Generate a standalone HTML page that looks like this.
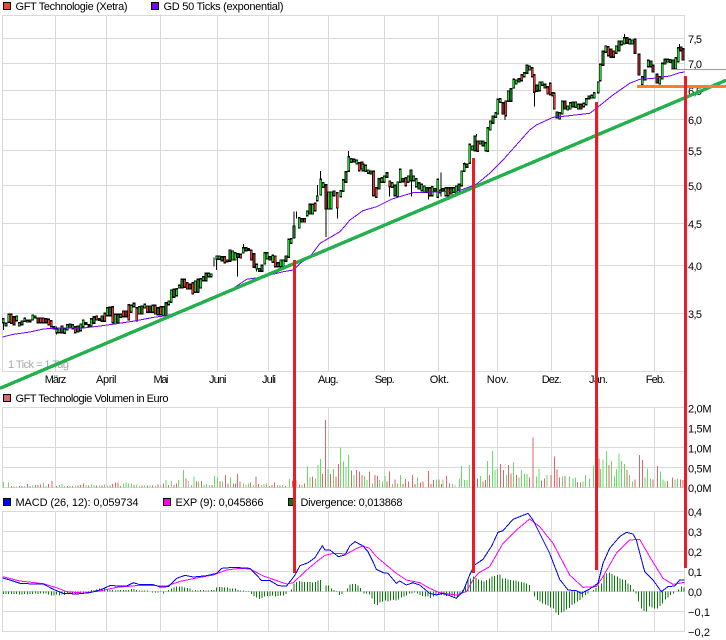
<!DOCTYPE html>
<html><head><meta charset="utf-8"><style>
html,body{margin:0;padding:0;background:#fff;width:726px;height:640px;overflow:hidden}
svg{display:block}
text{font-family:"Liberation Sans",Arial,sans-serif;font-size:11px;fill:#000}
</style></head><body>
<svg width="726" height="640" viewBox="0 0 726 640" xmlns="http://www.w3.org/2000/svg">
<defs>
<g id="G">
<path transform="translate(0,600)" d="M10 358V366M18 372V376M26 345V365M50 350V360M58 370V376M66 365V372M74 357V362M82 363V364M90 362V363M98 347V358M106 350V351M162 382V385M170 388V396M178 386V396M186 380V396M194 388V398M202 376V388M210 374V382M218 376V384M234 380V394M242 374V390M250 362V378M258 370V371M266 376V377M274 358V376M282 352V368M298 358V359M306 350V362M322 325V345M330 324V345M346 345V370M354 345V368M362 345V350M394 318V335M402 312V318M418 322V340M426 320V340M434 315V322M458 318V335M474 325V342M490 322V345M498 310V345M506 305V312M514 272V305M522 270V290M530 268V285M538 258V262M546 240V262M586 245V275M594 240V275M602 238V262M610 232V240M618 222V240M626 222V228M634 224V228M650 170V176M658 170V176M666 172V180M682 182V183M690 152V182M698 155V178M706 160V178M714 163V170M730 145V157M738 145V150M746 148V149M770 195V205M778 208V212M786 198V212M794 160V190M802 160V175M810 172V178M818 168V185M834 190V198M842 182V198M850 182V198M858 170V182M866 120V170M874 118V128M882 80V112M898 55V82M906 58V64M922 35V45M930 15V40M938 15V40"/>
<path d="M952 590V600M962 540V583M970 550V560M986 578V625M994 578V625M1002 575V585M1022 574V588M1030 541V572M1038 517V545M1046 472V512M1054 478V485M1062 480V484M1070 482V490"/>
<path transform="translate(1089,0)" d="M0 495V510M8 498V512M16 512V518M24 515V520M48 538V565M56 535V545M64 530V545M72 520V530M88 550V560M96 558V585M104 548V588M112 510V545M120 538V543M136 530V545M144 512V540M152 530V540M160 538V558M168 550V565M176 555V570M184 560V575M192 565V575M208 562V585M216 568V572M224 540V590M232 573V577M240 568V572M248 565V585M264 565V580M272 565V575M280 560V580M288 555V570M296 515V555M304 493V512M312 495V500M320 435V488M328 440V448M336 410V450M352 425V430M360 425V435M368 430V450M374 385V452M382 365V388M390 350V368M398 340V350M404 300V340M412 298V305M436 275V302M444 268V302M452 240V262M460 242V250M468 238V244M484 220V228M492 198V218M500 200V208M522 258V272M530 248V270M538 248V254M546 255V262M570 280V285M582 338V352M590 340V355M598 305V340M614 320V328M622 310V325M630 308V318M638 308V320M646 315V325M662 312V318M670 298V312M678 290V294M686 288V292M694 280V292M706 248V276M712 195V240M720 156V194M728 140V155M760 140V158M768 125V150M776 125V132M784 115V130M800 120V130M808 122V130M838 232V252M846 212V238M856 183V198M864 185V198M890 232V250M898 192V235M906 180V190M914 180V184M922 181V185M930 182V205M938 175V205M946 145V183"/>
</g>
<g id="R">
<path transform="translate(0,600)" d="M34 345V368M42 352V372M114 356V366M122 356V366M130 356V366M138 358V366M146 360V372M154 364V378M226 382V396M290 350V358M314 342V362M338 322V366M370 335V348M378 335V348M386 316V358M410 325V360M442 320V335M450 320V335M466 318V340M482 322V342M554 240V260M562 250V265M570 255V265M578 250V280M674 172V186M722 165V172M754 153V178M762 163V200M826 170V198M914 58V64M946 12V30"/>
<path d="M978 556V625M1012 580V622M1078 490V510M1086 488V505"/>
<path transform="translate(1089,0)" d="M32 516V585M40 565V590M80 545V558M128 535V555M200 565V585M256 565V585M344 425V452M420 310V340M428 305V345M476 226V240M508 205V228M514 226V275M554 262V280M562 252V282M574 282V325M606 305V325M654 315V325M736 142V165M744 150V170M752 155V170M792 115V128M816 120V158M828 165V223M870 198V214M882 225V247M954 143V150M960 148V178"/>
</g>
</defs>

<!-- grid -->
<path fill="none" stroke="#d9d9d9" stroke-width="1" shape-rendering="crispEdges" d="M2.5 15.5V371.5M55.5 15.5V371.5M106.5 15.5V371.5M160.5 15.5V371.5M217.5 15.5V371.5M268.5 15.5V371.5M328.5 15.5V371.5M384.5 15.5V371.5M438.5 15.5V371.5M497.5 15.5V371.5M551.5 15.5V371.5M598.5 15.5V371.5M654.5 15.5V371.5M684.5 15.5V371.5
M2 15.5H685M2 38.5H685M2 63.5H685M2 90.5H685M2 119.5H685M2 150.5H685M2 185.5H685M2 223.5H685M2 265.5H685M2 313.5H685M2 371.5H685
M2.5 407.5V487.5M55.5 407.5V487.5M106.5 407.5V487.5M160.5 407.5V487.5M217.5 407.5V487.5M268.5 407.5V487.5M328.5 407.5V487.5M384.5 407.5V487.5M438.5 407.5V487.5M497.5 407.5V487.5M551.5 407.5V487.5M598.5 407.5V487.5M654.5 407.5V487.5M684.5 407.5V487.5
M2 407.5H685M2 427.5H685M2 447.5H685M2 467.5H685M2 487.5H685
M2.5 511.5V631.5M55.5 511.5V631.5M106.5 511.5V631.5M160.5 511.5V631.5M217.5 511.5V631.5M268.5 511.5V631.5M328.5 511.5V631.5M384.5 511.5V631.5M438.5 511.5V631.5M497.5 511.5V631.5M551.5 511.5V631.5M598.5 511.5V631.5M654.5 511.5V631.5M684.5 511.5V631.5
M2 511.5H685M2 531.5H685M2 551.5H685M2 571.5H685M2 591.5H685M2 611.5H685M2 631.5H685"/>

<!-- legends -->
<g shape-rendering="crispEdges" stroke="#000">
<rect x="3.5" y="2.5" width="7" height="7" fill="#f44336"/>
<rect x="151.5" y="2.5" width="7" height="7" fill="#7a00ff"/>
<rect x="3.5" y="394.5" width="7" height="7" fill="#d96b6b"/>
<rect x="3.5" y="498.5" width="7" height="7" fill="#0000ff"/>
<rect x="163.5" y="498.5" width="7" height="7" fill="#ff00ff"/>
<rect x="288.5" y="498.5" width="7" height="7" fill="#0a7a0a"/>
</g>
<text x="15.5" y="10" textLength="112">GFT Technologie (Xetra)</text>
<text x="163.5" y="10" textLength="120">GD 50 Ticks (exponential)</text>
<text x="15.5" y="402" textLength="153">GFT Technologie Volumen in Euro</text>
<text x="15.5" y="506" textLength="123">MACD (26, 12): 0,059734</text>
<text x="175.5" y="506" textLength="88">EXP (9): 0,045866</text>
<text x="300.5" y="506" textLength="102">Divergence: 0,013868</text>

<!-- x labels -->
<g>
<text x="44.7" y="383" textLength="21.5">März</text>
<text x="96" y="383" textLength="20.5">April</text>
<text x="153.5" y="383" textLength="15">Mai</text>
<text x="209" y="383" textLength="17.5">Juni</text>
<text x="262" y="383" textLength="14">Juli</text>
<text x="318" y="383" textLength="20.5">Aug.</text>
<text x="374.7" y="383" textLength="20">Sep.</text>
<text x="429.7" y="383" textLength="19.5">Okt.</text>
<text x="486.7" y="383" textLength="22">Nov.</text>
<text x="541.7" y="383" textLength="20">Dez.</text>
<text x="589" y="383" textLength="19">Jan.</text>
<text x="645.7" y="383" textLength="19.5">Feb.</text>
</g>
<text x="8" y="368" textLength="61" style="fill:#a8a8a8">1 Tick = 1 Tag</text>

<!-- y labels -->
<g>
<text x="688" y="43" textLength="14">7,5</text>
<text x="688" y="68" textLength="14">7,0</text>
<text x="688" y="95" textLength="14">6,5</text>
<text x="688" y="124" textLength="14">6,0</text>
<text x="688" y="155" textLength="14">5,5</text>
<text x="688" y="190" textLength="14">5,0</text>
<text x="688" y="228" textLength="14">4,5</text>
<text x="688" y="270" textLength="14">4,0</text>
<text x="688" y="318" textLength="14">3,5</text>
<text x="688" y="412.500" textLength="23.500">2,0M</text>
<text x="688" y="432.500" textLength="23.500">1,5M</text>
<text x="688" y="452.500" textLength="23.500">1,0M</text>
<text x="688" y="472.500" textLength="23.500">0,5M</text>
<text x="688" y="492" textLength="23.500">0,0M</text>
<text x="688" y="516" textLength="14">0,4</text>
<text x="688" y="536" textLength="14">0,3</text>
<text x="688" y="556" textLength="14">0,2</text>
<text x="688" y="576" textLength="14">0,1</text>
<text x="688" y="596" textLength="14">0,0</text>
<text x="688" y="616" textLength="22">−0,1</text>
<text x="688" y="636" textLength="22">−0,2</text>
</g>

<!-- candles -->
<g transform="scale(.33333)" fill="none" shape-rendering="crispEdges">
<g stroke="#000" stroke-width="3">
<path d="M10 958V990M170 980V1004M250 958V978M642 772V800M650 768V810M712 760V830M730 732V757M770 795V815M882 635V680M890 635V655M952 555V600M962 513V540M978 625V711M1012 622V655M1046 453V472"/>
<path transform="translate(1089,0)" d="M28 515V590M80 545V590M146 512V590M196 565V598M234 518V590M304 488V493M340 402V410M426 305V360M514 226V320M784 102V115M950 132V143"/>
</g>
<g stroke="#000" stroke-width="8" stroke-linecap="square"><use href="#G"/><use href="#R"/></g>
<use href="#G" stroke="#1fd42a" stroke-width="4"/>
<use href="#R" stroke="#ee3333" stroke-width="4"/>
</g>

<!-- moving average -->
<g transform="scale(.33333)" fill="none" stroke="#7a00ff" stroke-width="3" shape-rendering="crispEdges">
<path d="M8 1011L40 1003L90 996L130 987L170 984L250 984L300 978L350 971L410 962L460 952L500 947L530 938L695 868L740 838L780 832L850 815L880 810L900 790L930 770L960 730L1020 695L1050 660L1089 632L1130 620L1174 598L1199 590L1239 578L1289 576L1339 575L1369 575L1429 553L1469 520L1509 480L1549 435L1589 390L1609 375L1659 352L1709 347L1769 340L1789 325L1839 285L1889 250L1919 238L1959 235L2009 228L2039 218L2054 216"/>
</g>

<!-- volume -->
<g transform="translate(0,420) scale(.33333)" fill="none" stroke-width="3" shape-rendering="crispEdges">
<path stroke="#66dd66" d="M10 202V186M26 202V188M50 202V199M74 202V198M98 202V196M130 202V188M138 202V198M178 202V195M186 202V192M194 202V198M210 202V198M226 202V197M258 202V195M274 202V193M282 202V195M298 202V196M314 202V193M322 202V198M370 202V190M378 202V187M386 202V190M394 202V190M410 202V194M418 202V198M434 202V196M450 202V196M466 202V198M482 202V197M498 202V180M514 202V183M536 202V180M550 202V150M574 202V195M582 202V170M596 202V185M612 202V195M620 202V192M628 202V195M644 202V168M652 202V172M668 202V185M692 202V172M730 202V190M738 202V195M746 202V190M760 202V195M784 202V195M792 202V192M800 202V190M832 202V195M848 202V195M868 202V177M906 202V195M922 202V140M930 202V173M946 202V175M954 202V135M962 202V117M984 202V147M1000 202V147M1022 202V82M1030 202V125M1038 202V140M1046 202V105M1062 202V165"/>
<path stroke="#dd6666" d="M34 202V198M42 202V199M58 202V198M66 202V198M82 202V192M90 202V198M106 202V195M114 202V195M122 202V193M146 202V192M156 202V183M170 202V198M202 202V198M218 202V198M234 202V197M242 202V195M250 202V190M266 202V196M290 202V197M306 202V197M330 202V196M338 202V192M346 202V188M354 202V188M362 202V198M402 202V195M426 202V197M442 202V196M458 202V197M474 202V194M490 202V190M506 202V195M522 202V195M530 202V190M558 202V175M590 202V185M604 202V183M636 202V195M660 202V185M676 202V165M684 202V190M700 202V190M706 202V190M712 202V162M720 202V185M752 202V188M768 202V170M776 202V192M808 202V198M816 202V195M824 202V188M840 202V197M856 202V198M878 202V182M888 202V182M898 202V193M914 202V190M938 202V170M968 202V162M976 202V0M992 202V162M1008 202V170M1016 202V132M1054 202V152M1070 202V150M1078 202V155M1086 202V165"/>
<path stroke="#bbbbbb" d="M566 202V183"/>
<g transform="translate(1089,0)">
<path stroke="#66dd66" d="M4 202V168M12 202V180M28 202V190M50 202V180M58 202V185M66 202V168M88 202V192M104 202V190M112 202V165M164 202V172M220 202V178M240 202V178M268 202V192M290 202V175M296 202V138M304 202V180M312 202V180M320 202V135M352 202V168M374 202V123M388 202V93M396 202V150M404 202V145M430 202V165M452 202V127M468 202V172M476 202V150M484 202V160M492 202V162M520 202V170M528 202V147M552 202V165M598 202V170M620 202V170M630 202V175M638 202V172M660 202V185M668 202V165M680 202V175M692 202V137M712 202V147M720 202V118M730 202V93M746 202V123M754 202V170M760 202V147M768 202V100M776 202V123M784 202V132M800 202V165M808 202V185M846 202V172M854 202V145M862 202V175M892 202V155M900 202V178M906 202V185M936 202V178M944 202V175"/>
<path stroke="#dd6666" d="M20 202V155M36 202V165M44 202V168M72 202V185M80 202V155M96 202V178M120 202V192M128 202V177M136 202V185M148 202V165M156 202V192M172 202V188M180 202V185M196 202V153M204 202V192M212 202V180M228 202V178M236 202V192M250 202V168M260 202V190M344 202V175M360 202V185M368 202V180M380 202V165M412 202V132M422 202V150M436 202V135M444 202V160M460 202V165M500 202V172M510 202V52M536 202V182M544 202V175M564 202V165M574 202V110M582 202V148M590 202V172M606 202V168M644 202V186M652 202V188M708 202V115M738 202V135M792 202V150M816 202V178M830 202V105M838 202V120M870 202V178M884 202V138M914 202V183M928 202V172M952 202V178M960 202V180"/>
<path stroke="#bbbbbb" d="M276 202V195"/>
</g>
</g>

<!-- macd histogram -->
<g transform="translate(0,420) scale(.33333)" fill="none" stroke="#0a7a0a" stroke-width="3" shape-rendering="crispEdges">
<path d="M10 514V522M18 514V522M26 514V522M34 514V522M42 514V522M50 514V522M58 514V524M66 514V524M74 514V522M82 514V523M90 514V522M98 514V522M106 514V521M114 514V522M122 514V521M130 514V521M138 514V520M146 514V524M154 514V526M162 514V526M170 514V524M178 514V526M186 514V524M194 514V525M202 514V522M210 514V520M218 514V522M226 514V524M234 514V522M242 514V520M250 514V518M258 514V517M266 514V513M274 514V510M282 514V510M290 514V508M298 514V506M306 514V508M314 514V506M322 514V508M330 514V510M338 514V510M346 514V511M354 514V510M362 514V510M370 514V510M378 514V510M386 514V510M394 514V507M402 514V507M410 514V510M418 514V512M426 514V512M434 514V511M442 514V512M450 514V514M458 514V518M466 514V518M474 514V518M482 514V516M490 514V521M498 514V516M506 514V510M514 514V506M522 514V503M530 514V500M538 514V500M546 514V499M554 514V502M562 514V504M570 514V506M578 514V512M586 514V510M594 514V511M602 514V510M610 514V510M618 514V511M626 514V511M634 514V510M642 514V510M650 514V503M658 514V501M666 514V501M674 514V503M682 514V503M690 514V505M698 514V506M706 514V506M714 514V510M722 514V512M730 514V511M738 514V513M746 514V516M754 514V522M762 514V528M770 514V533M778 514V537M786 514V534M794 514V530M802 514V528M810 514V528M818 514V526M826 514V529M834 514V528M842 514V527M850 514V526M858 514V522M866 514V514M874 514V508M882 514V490M890 514V486M898 514V483M906 514V484M914 514V486M922 514V486M930 514V486M938 514V488M946 514V486M954 514V482M962 514V480M970 514V514M978 514V497M986 514V497M994 514V506M1002 514V510M1010 514V516M1018 514V525M1026 514V522M1034 514V514M1042 514V505M1050 514V493M1058 514V492M1066 514V492M1074 514V497M1082 514V504"/>
<path transform="translate(1089,0)" d="M3 514V520M11 514V520M19 514V524M27 514V535M35 514V552M43 514V555M51 514V548M59 514V545M67 514V542M75 514V544M83 514V541M91 514V540M99 514V542M107 514V538M115 514V533M123 514V530M131 514V526M139 514V520M147 514V520M155 514V518M163 514V520M171 514V525M179 514V528M187 514V530M195 514V530M203 514V534M211 514V530M219 514V525M227 514V525M235 514V525M243 514V526M251 514V528M259 514V528M267 514V529M275 514V530M283 514V530M291 514V520M299 514V510M307 514V498M315 514V480M323 514V475M331 514V470M339 514V474M347 514V478M355 514V482M363 514V485M371 514V480M379 514V475M387 514V470M395 514V468M403 514V465M411 514V464M419 514V475M427 514V476M435 514V478M443 514V480M451 514V481M459 514V482M467 514V484M475 514V486M483 514V488M491 514V490M499 514V495M507 514V515M515 514V530M523 514V540M531 514V545M539 514V550M547 514V553M555 514V556M563 514V562M571 514V566M579 514V578M587 514V585M595 514V578M603 514V574M611 514V568M619 514V564M627 514V555M635 514V550M643 514V545M651 514V540M659 514V532M667 514V525M675 514V520M683 514V515M691 514V510M699 514V504M707 514V496M715 514V490M723 514V465M731 514V460M739 514V458M747 514V462M755 514V466M763 514V470M771 514V475M779 514V478M787 514V480M795 514V490M803 514V495M811 514V508M819 514V520M827 514V545M835 514V565M843 514V573M851 514V574M859 514V560M867 514V563M875 514V565M883 514V566M891 514V558M899 514V550M907 514V538M915 514V532M923 514V525M931 514V520M939 514V515M947 514V508M955 514V500M963 514V502"/>
</g>

<!-- macd lines -->
<g transform="translate(0,420) scale(.33333)" fill="none" stroke-width="3" shape-rendering="crispEdges">
<path stroke="#ff00ff" d="M8 470L60 483L130 491L175 505L200 515L250 519L300 513L350 502L420 496L500 498L540 484L600 472L640 465L680 450L720 445L750 447L790 468L860 492L880 488L920 450L950 425L975 406L1000 400L1040 402L1070 385L1089 378L1109 385L1129 410L1159 435L1189 460L1219 480L1259 488L1289 505L1319 518L1369 525L1399 515L1419 480L1434 460L1469 440L1509 370L1549 330L1589 297L1619 320L1659 370L1709 465L1749 502L1789 500L1809 470L1849 400L1889 360L1919 358L1949 410L1989 475L2019 493L2054 487"/>
<path stroke="#0000ff" d="M8 474L30 480L60 490L100 492L130 492L160 508L190 520L230 522L270 518L300 510L330 497L380 498L400 488L420 494L460 494L480 501L505 500L530 475L555 466L580 471L620 467L650 460L665 445L700 442L750 445L765 460L785 482L810 482L835 497L860 498L885 465L900 437L925 428L945 413L967 377L975 390L990 390L1015 410L1035 405L1050 377L1065 365L1089 378L1104 395L1119 425L1129 448L1149 458L1164 460L1189 490L1199 483L1219 495L1239 488L1259 495L1289 520L1309 525L1329 520L1349 527L1369 535L1389 515L1409 465L1424 435L1449 418L1474 380L1494 337L1509 332L1539 298L1584 280L1599 300L1619 340L1649 400L1679 478L1704 510L1729 512L1744 520L1769 507L1794 490L1809 430L1829 385L1859 350L1879 337L1899 342L1909 360L1934 455L1959 480L1984 515L2004 500L2024 498L2039 480L2054 480"/>
</g>

<!-- drawn lines -->
<path d="M671 69.500H726" stroke="#ff7f27" stroke-width="1" shape-rendering="crispEdges"/>
<path d="M0 388.300L726 80.300" stroke="#22b14c" stroke-width="3.400" fill="none" shape-rendering="crispEdges"/>
<path d="M637 86.500H726" stroke="#ff7f27" stroke-width="3" shape-rendering="crispEdges"/>
<g fill="#ed1c24" shape-rendering="crispEdges">
<rect x="293" y="260" width="3" height="313"/>
<rect x="472" y="158" width="3" height="415"/>
<rect x="595" y="102" width="3" height="468"/>
<rect x="684" y="76" width="3" height="492"/>
</g>
</svg>
</body></html>
